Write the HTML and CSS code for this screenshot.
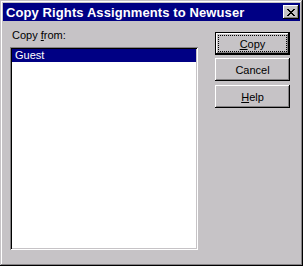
FILE: index.html
```html
<!DOCTYPE html>
<html lang="en">
<head>
    <meta charset="UTF-8">
    <title>Copy Rights Assignments to Newuser</title>
    <link rel="stylesheet" href="styles.css">
</head>
<body>
    <div class="window">
        <div class="titlebar">
            <span class="title">Copy Rights Assignments to Newuser</span>
            <button class="close" aria-label="Close">
                <svg width="8" height="7" viewBox="0 0 8 7">
                    <path d="M0 0h2v1h1v1h2v-1h1v-1h2v1h-1v1h-1v1h-1v1h1v1h1v1h1v1h-2v-1h-1v-1h-2v1h-1v1h-2v-1h1v-1h1v-1h1v-1h-1v-1h-1v-1h-1z" fill="#000"/>
                </svg>
            </button>
        </div>
        <div class="content">
            <div class="left">
                <label class="label" for="users">Copy <u>f</u>rom:</label>
                <div class="listbox" id="users">
                    <div class="item selected">Guest</div>
                </div>
            </div>
            <div class="buttons">
                <button class="btn default"><span class="focus"><u>C</u>opy</span></button>
                <button class="btn">Cancel</button>
                <button class="btn help"><u>H</u>elp</button>
            </div>
        </div>
    </div>
</body>
</html>
```

FILE: styles.css
```css
body {
    margin: 0;
    background: #c6c3c6;
    font-family: "Liberation Sans", Arial, sans-serif;
    font-size: 11px;
    color: #000;
}
.window {
    width: 303px;
    height: 266px;
    box-sizing: border-box;
    padding: 3px;
    background: #c6c3c6;
    box-shadow: inset -1px -1px #000, inset 1px 1px #c6c3c6, inset -2px -2px #848284, inset 2px 2px #fff;
}
.titlebar {
    height: 18px;
    background: #000084;
    display: flex;
    align-items: center;
    justify-content: space-between;
    padding: 0 1px 0 3px;
}
.title {
    color: #fff;
    font-weight: bold;
    font-size: 13px;
    letter-spacing: 0.1px;
}
.close {
    width: 16px;
    height: 14px;
    padding: 0;
    border: none;
    background: #c6c3c6;
    box-shadow: inset -1px -1px #000, inset 1px 1px #fff, inset -2px -2px #848284;
    display: flex;
    align-items: center;
    justify-content: center;
}
.content {
    display: flex;
    gap: 17px;
    padding: 8px 0 0 7px;
}
.left {
    display: flex;
    flex-direction: column;
}
.label {
    padding-left: 2px;
    line-height: 13px;
    margin-bottom: 5px;
}
.listbox {
    width: 188px;
    height: 203px;
    box-sizing: border-box;
    padding: 2px;
    background: #fff;
    box-shadow: inset 1px 1px #848284, inset -1px -1px #fff, inset 2px 2px #000, inset -2px -2px #c6c3c6;
}
.item {
    height: 13px;
    line-height: 13px;
    padding-left: 3px;
}
.selected {
    background: #000084;
    color: #fff;
}
.buttons {
    display: flex;
    flex-direction: column;
    gap: 3px;
    padding-top: 3px;
}
.btn {
    width: 75px;
    height: 23px;
    padding: 0;
    border: none;
    font-family: "Liberation Sans", Arial, sans-serif;
    font-size: 11px;
    color: #000;
    background: #c6c3c6;
    box-shadow: inset -1px -1px #000, inset 1px 1px #fff, inset -2px -2px #848284;
}
.btn.help {
    margin-top: 1px;
}
.btn.default {
    box-shadow: inset 0 0 0 1px #000, inset -2px -2px #000, inset 2px 2px #fff, inset -3px -3px #848284;
    display: flex;
    padding: 4px;
}
.focus {
    flex: 1;
    display: flex;
    align-items: center;
    justify-content: center;
    outline: 1px dotted #000;
}
```
